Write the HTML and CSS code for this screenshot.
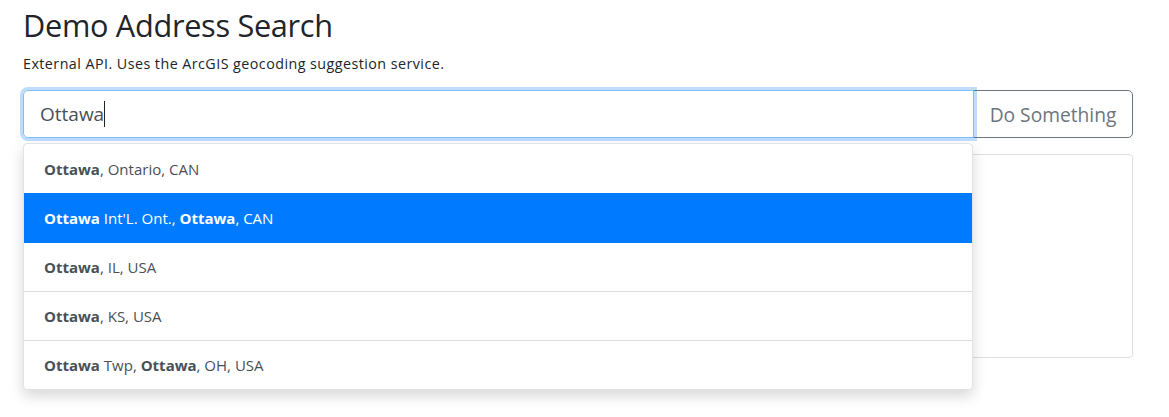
FILE: index.html
```html
<!DOCTYPE html>
<html>
<head>
<meta charset="utf-8">
<link rel="stylesheet" href="styles.css">
</head>
<body>
<div class="container">
  <h1 class="title">Demo Address Search</h1>
  <p class="lead">External API. Uses the ArcGIS geocoding suggestion service.</p>
  <div class="search">
    <div class="input-group">
      <div class="input">Ottawa<span class="caret"></span></div>
      <button class="btn">Do Something</button>
    </div>
    <div class="card"></div>
    <ul class="menu">
      <li class="item"><b>Ottawa</b>, Ontario, CAN</li>
      <li class="item active"><b>Ottawa</b> Int'L. Ont., <b>Ottawa</b>, CAN</li>
      <li class="item"><b>Ottawa</b>, IL, USA</li>
      <li class="item"><b>Ottawa</b>, KS, USA</li>
      <li class="item"><b>Ottawa</b> Twp, <b>Ottawa</b>, OH, USA</li>
    </ul>
  </div>
</div>
</body>
</html>
```
FILE: styles.css
```css
html, body { margin: 0; padding: 0; background: #fff; }
body { font-family: "Open Sans", "Noto Sans", sans-serif; color: #212529; min-height: 417px; }
.container { width: 1110px; margin-left: 23px; padding-bottom: 60px; }
.title { font-size: 30.7px; font-weight: 400; margin: 0; padding-top: 5px; line-height: 40px; letter-spacing: -0.3px; }
.lead { font-size: 14.3px; margin: 9px 0 0; line-height: 20px; letter-spacing: 0.45px; }
.search { position: relative; margin-top: 16px; }
.input-group { display: flex; height: 48px; }
.input { flex: 1; box-sizing: border-box; border: 1px solid #80bdff; border-radius: 5px 0 0 5px; box-shadow: 0 0 0 3px rgba(0,123,255,.25); font-size: 19px; color: #495057; padding: 0 16px; display: flex; align-items: center; position: relative; z-index: 2; }
.caret { display: inline-block; width: 1px; height: 26px; background: #222; margin-left: 0; }
.btn { width: 160px; box-sizing: border-box; border: 1px solid #6c757d; border-radius: 0 5px 5px 0; background: #fff; color: #6c757d; font-family: inherit; font-size: 19.2px; margin-left: -1px; padding: 0; }
.card { margin-top: 16px; height: 204px; border: 1px solid #dfdfdf; border-radius: 4px; box-sizing: border-box; }
.menu { position: absolute; top: 53px; left: 0; width: 950px; margin: 0; padding: 0; list-style: none; background: #fff; border: 1px solid #e3e3e3; border-radius: 4px; box-shadow: 0 6px 14px rgba(0,0,0,.16); box-sizing: border-box; overflow: hidden; z-index: 3; }
.item { height: 49px; box-sizing: border-box; padding: 0 20px; display: flex; align-items: center; font-size: 15px; color: #495057; white-space: pre; }
.item + .item { border-top: 1px solid #dedede; }
.item b { font-weight: 700; }
.item.active { background: #007bff; color: #fff; border-top-color: #007bff; }
.item.active + .item { border-top-color: #007bff; }
```
